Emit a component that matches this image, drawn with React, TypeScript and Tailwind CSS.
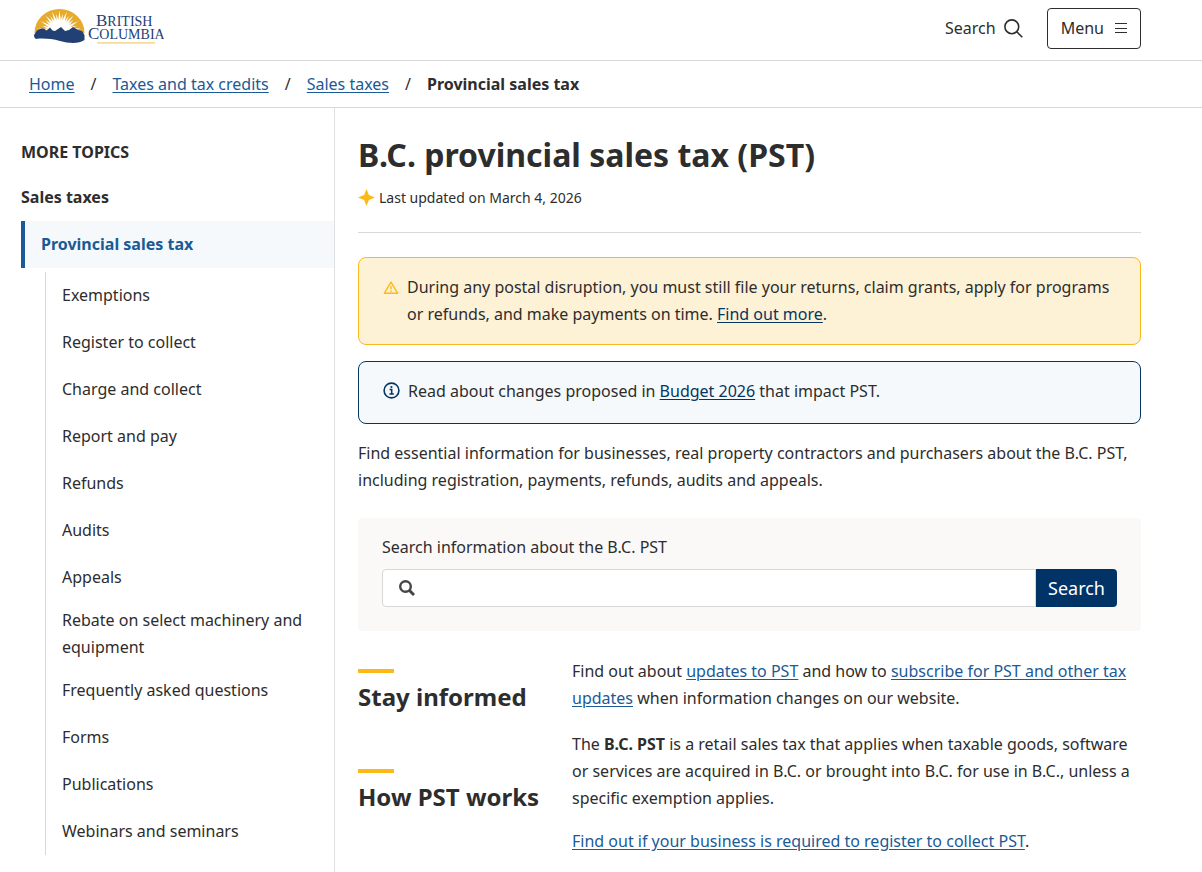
import type { ReactNode } from "react";

const topics = [
  "Exemptions",
  "Register to collect",
  "Charge and collect",
  "Report and pay",
  "Refunds",
  "Audits",
  "Appeals",
  "Rebate on select machinery and equipment",
  "Frequently asked questions",
  "Forms",
  "Publications",
  "Webinars and seminars",
];

const breadcrumbs = ["Home", "Taxes and tax credits", "Sales taxes"];

// angles of the sun rays in degrees, 0 points up
const rays = [-80, -70, -60, -50, -40, -30, -20, -10, 0, 10, 20, 30, 40, 50, 60, 70, 80];

function Logo() {
  return (
    <svg width="131" height="37" viewBox="0 0 131 37" role="img" aria-label="British Columbia">
      <path d="M1.5 25 A25 24 0 0 1 51.5 25 Z" fill="#e6ab2c" />
      <circle cx="26.5" cy="22" r="10" fill="#fff" />
      {rays.map((angle, i) => (
        <path
          key={angle}
          d={i % 2 === 0 ? "M25 14 L26.5 2.5 L28 14 Z" : "M25.2 14 L26.5 5.5 L27.8 14 Z"}
          fill="#fff"
          transform={`rotate(${angle} 26.5 24)`}
        />
      ))}
      <path
        d="M1 27 L4 22.5 L8 20.5 L11 20.5 L13.5 22.5 L17 19.5 L19.5 22.5 L22 23 L28 19 L32 23 L36 22 L40 19 L45 22 L49 23 L51.5 27 L51.5 32 C46 36 36 35.5 27 33 C18 30.5 9 30 3 31 C1 30 1 28 1 27 Z"
        fill="#234075"
      />
      <g fill="#234075" fontFamily="'Liberation Serif', serif">
        <text x="63" y="18" fontSize="17">
          B<tspan fontSize="14">RITISH</tspan>
        </text>
        <text x="55" y="31" fontSize="17">
          C<tspan fontSize="14">OLUMBIA</tspan>
        </text>
      </g>
      <path d="M64 34.8 H122" stroke="#f6dc9c" strokeWidth="1.8" />
    </svg>
  );
}

function TextLink({ children }: { children: ReactNode }) {
  return (
    <a href="#" className="text-[#1a5a96] underline underline-offset-2">
      {children}
    </a>
  );
}

function Header() {
  return (
    <header className="flex h-[61px] items-center justify-between border-b border-[#d8d8d8] pr-[61px] pl-[33px]">
      <a href="#" className="mb-2">
        <Logo />
      </a>
      <div className="mb-1 flex items-center gap-6">
        <button className="flex items-center gap-2">
          Search
          <svg width="19" height="19" viewBox="0 0 19 19" fill="none" stroke="#2d2d2d" strokeWidth="1.6" aria-hidden="true">
            <circle cx="7.8" cy="7.8" r="6.9" />
            <path d="M12.7 12.7 L18.3 18.3" />
          </svg>
        </button>
        <button className="flex h-[41px] items-center gap-[11px] rounded border border-[#2d2d2d] px-[13px]">
          Menu
          <svg width="12" height="11" viewBox="0 0 12 11" stroke="#2d2d2d" aria-hidden="true">
            <path d="M0 0.5 H12 M0 5.5 H12 M0 9.5 H12" />
          </svg>
        </button>
      </div>
    </header>
  );
}

function Breadcrumbs() {
  return (
    <nav aria-label="Breadcrumb" className="border-b border-[#d8d8d8] py-[10px] pl-[29px]">
      <ol className="flex leading-[26px]">
        {breadcrumbs.map((crumb) => (
          <li key={crumb}>
            <TextLink>{crumb}</TextLink>
            <span className="px-4">/</span>
          </li>
        ))}
        <li className="font-bold">Provincial sales tax</li>
      </ol>
    </nav>
  );
}

function Sidebar() {
  return (
    <nav aria-label="More topics" className="w-[335px] shrink-0 border-r border-[#e0e0e0] pt-[31px] pb-[17px] pl-[21px]">
      <h2 className="mb-2 font-bold">MORE TOPICS</h2>
      <a href="#" className="block py-[10px] font-bold">
        Sales taxes
      </a>
      <a href="#" className="mb-1 block border-l-4 border-[#1a5a96] bg-[#f5f9fc] py-[10px] pl-4 font-bold text-[#1a5a96]">
        Provincial sales tax
      </a>
      <ul className="ml-6 border-l border-[#d8d8d8]">
        {topics.map((topic) => (
          <li key={topic}>
            <a href="#" className="flex min-h-[47px] items-center py-[6px] pr-6 pl-4">
              {topic}
            </a>
          </li>
        ))}
      </ul>
    </nav>
  );
}

function SectionTitle({ children }: { children: ReactNode }) {
  return (
    <h2 className="mt-[11px] text-2xl leading-8 font-bold">
      <span className="mb-2 block h-1 w-9 bg-[#fcba19]" />
      {children}
    </h2>
  );
}

export default function App() {
  return (
    <div className="flex min-h-screen flex-col bg-white font-['Noto_Sans',sans-serif] text-base leading-[27px] text-[#2d2d2d]">
      <Header />
      <Breadcrumbs />
      <div className="flex flex-1">
        <Sidebar />
        <main className="min-w-0 flex-1 pt-6 pr-[61px] pb-4 pl-[23px]">
          <h1 className="text-[32px] leading-[46px] font-bold">B.C. provincial sales tax (PST)</h1>
          <p className="mt-[6px] flex items-center gap-1 text-sm leading-[27px]">
            <svg width="17" height="17" viewBox="0 0 17 17" fill="#fcba19" aria-hidden="true">
              <path d="M8.5 0 L10.9 6.1 L17 8.5 L10.9 10.9 L8.5 17 L6.1 10.9 L0 8.5 L6.1 6.1 Z" />
            </svg>
            Last updated on March 4, 2026
          </p>
          <hr className="mt-[21px] mb-6 border-[#d8d8d8]" />

          <div className="mb-4 flex gap-2 rounded-lg border border-[#fcba19] bg-[#fdf1d6] py-4 pr-6 pl-6">
            <svg className="mt-[6px] shrink-0" width="16" height="16" viewBox="0 0 16 16" fill="none" stroke="#fcba19" strokeWidth="1.4" strokeLinejoin="round" aria-hidden="true">
              <path d="M8 2.2 L14.6 13.2 H1.4 Z" />
              <path d="M8 6 V9.6 M8 10.6 V12" strokeWidth="1.4" />
            </svg>
            <p>
              During any postal disruption, you must still file your returns, claim grants, apply for programs or
              refunds, and make payments on time.{" "}
              <a href="#" className="text-[#053662] underline underline-offset-2">
                Find out more
              </a>
              .
            </p>
          </div>

          <div className="mb-4 flex gap-2 rounded-lg border border-[#053662] bg-[#f5f9fc] px-6 pt-4 pb-[18px]">
            <svg className="mt-1 shrink-0" width="17" height="17" viewBox="0 0 17 17" fill="none" stroke="#053662" strokeWidth="1.6" aria-hidden="true">
              <circle cx="8.5" cy="8.5" r="7.4" />
              <path d="M6.6 7.6 H8.7 V12 M6.4 12 H10.8" strokeWidth="1.5" />
              <circle cx="8.4" cy="5" r="1.1" fill="#053662" stroke="none" />
            </svg>
            <p>
              Read about changes proposed in{" "}
              <a href="#" className="text-[#053662] underline underline-offset-2">
                Budget 2026
              </a>{" "}
              that impact PST.
            </p>
          </div>

          <p className="mb-6">
            Find essential information for businesses, real property contractors and purchasers about the B.C. PST,
            including registration, payments, refunds, audits and appeals.
          </p>

          <form className="mb-[27px] rounded bg-[#faf9f8] px-6 pt-4 pb-6" onSubmit={(e) => e.preventDefault()}>
            <label htmlFor="pst-search" className="mb-2 block">
              Search information about the B.C. PST
            </label>
            <div className="flex h-[38px]">
              <div className="relative flex-1">
                <svg className="absolute top-[11px] left-[17px]" width="16" height="16" viewBox="0 0 16 16" fill="none" stroke="#474543" aria-hidden="true">
                  <circle cx="6.5" cy="6.5" r="5.3" strokeWidth="2.4" />
                  <path d="M10.4 10.4 L15 15" strokeWidth="2.9" />
                </svg>
                <input id="pst-search" type="text" className="h-full w-full rounded-l border border-[#d8d8d8] bg-white pr-3 pl-10" />
              </div>
              <button className="rounded-r bg-[#013366] px-3 text-lg text-white">Search</button>
            </div>
          </form>

          <div className="grid grid-cols-[190px_1fr] gap-x-6 gap-y-[18px]">
            <SectionTitle>Stay informed</SectionTitle>
            <p>
              Find out about <TextLink>updates to PST</TextLink> and how to{" "}
              <TextLink>subscribe for PST and other tax updates</TextLink> when information changes on our website.
            </p>
            <div className="pt-[27px]">
              <SectionTitle>How PST works</SectionTitle>
            </div>
            <div className="space-y-4">
              <p>
                The <strong>B.C. PST</strong> is a retail sales tax that applies when taxable goods, software or
                services are acquired in B.C. or brought into B.C. for use in B.C., unless a specific exemption
                applies.
              </p>
              <p>
                <TextLink>Find out if your business is required to register to collect PST</TextLink>.
              </p>
            </div>
          </div>
        </main>
      </div>
    </div>
  );
}
